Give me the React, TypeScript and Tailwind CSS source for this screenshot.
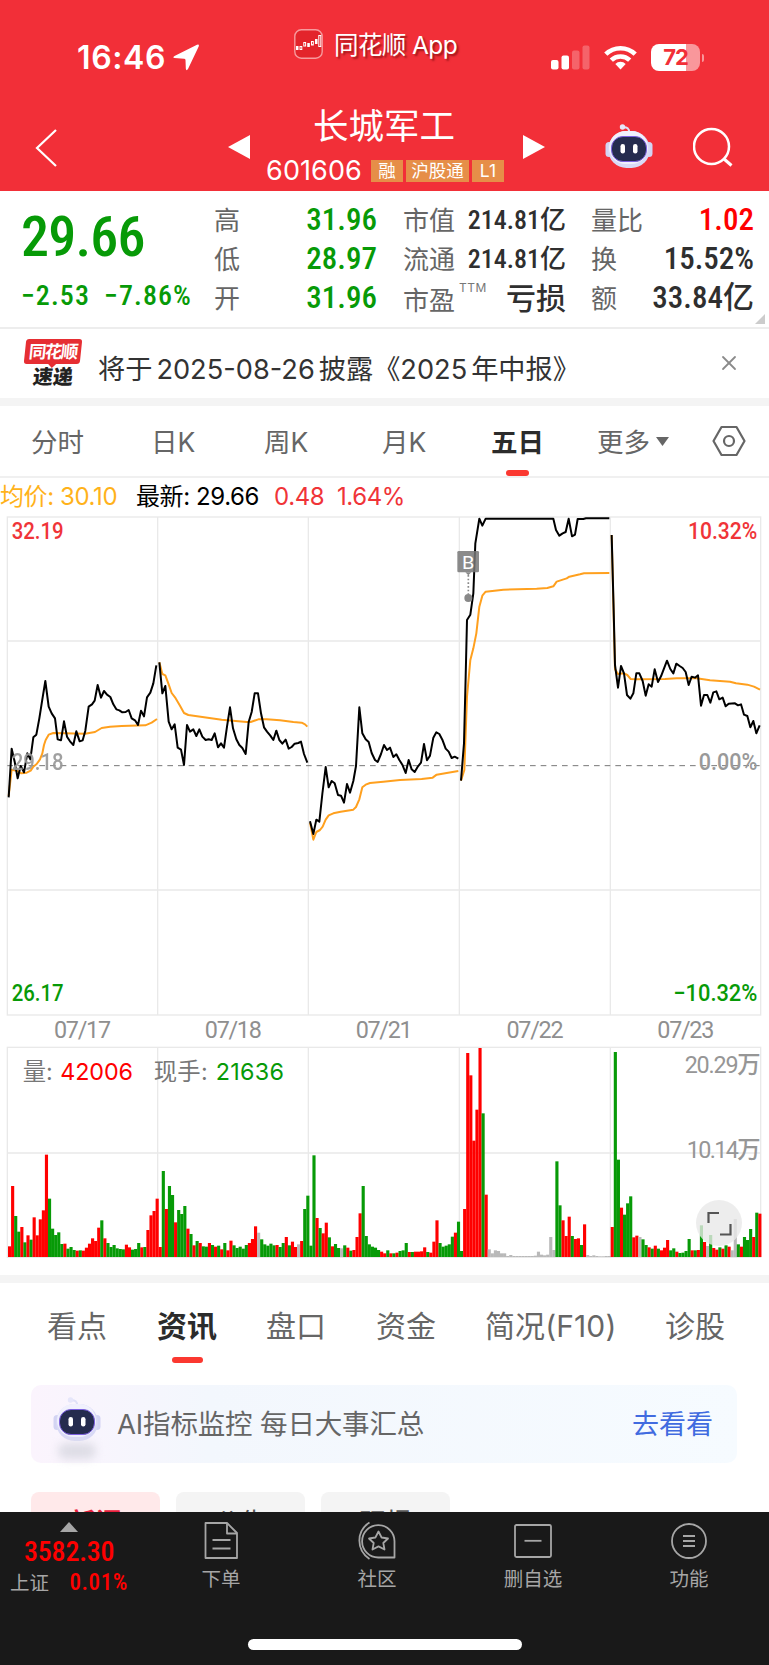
import React, { useState } from "react";
import { X } from "lucide-react";

const DAYS = ["07/17", "07/18", "07/21", "07/22", "07/23"];

// Chart space is 3 units per CSS pixel
const DAY_X = [22, 473, 925, 1378, 1831, 2282];

// [x offset, price points, average points]
const SERIES: [number, string, string][] = [
  [
    0,
    "26,862 35,716 44,755 53,805 62,768 72,787 82,730 91,748 100,682 109,674 118,625 127,568 136,513 146,590 155,610 165,625 173,688 183,691 192,634 201,680 210,694 220,705 229,664 239,694 248,691 256,662 266,590 276,583 284,572 293,525 303,563 312,543 321,554 331,561 340,583 349,598 358,601 367,607 377,606 386,600 395,625 405,631 414,645 423,602 432,619 441,562 451,548 460,520 469,466",
    "26,858 35,779 50,782 64,790 80,788 92,782 100,770 110,762 120,748 127,730 132,705 137,690 146,674 160,669 255,671 285,666 305,654 330,650 365,648 436,646 455,638 471,627",
  ],
  [
    0,
    "478,457 487,550 496,528 506,635 515,658 524,643 533,713 543,719 552,765 561,645 570,665 580,658 589,678 598,658 607,680 617,690 626,688 635,690 644,670 654,712 663,700 672,713 681,650 690,592 699,655 709,688 718,705 727,714 737,732 746,636 755,606 764,550 774,550 783,610 792,652 801,665 811,677 820,690 829,662 838,690 847,701 857,689 866,716 875,711 884,701 895,699 903,695 912,732 922,758",
    "478,457 487,492 496,496 506,523 515,549 525,562 540,587 552,609 565,615 665,629 740,636 752,636 775,628 800,628 840,631 880,636 905,638 915,643 922,650",
  ],
  [
    900,
    "30,934 40,972 49,929 58,935 67,852 77,771 86,832 95,813 104,820 114,855 123,857 132,878 141,822 150,848 160,813 168,768 178,592 187,670 197,688 206,696 215,729 225,750 233,756 243,732 252,705 261,720 270,713 280,741 289,733 298,750 307,764 317,789 326,750 335,778 344,786 354,769 363,758 372,702 381,751 390,737 400,683 409,667 418,672 427,689 437,716 446,725 455,744 464,740 475,746",
    "30,938 40,989 49,966 60,960 68,950 77,929 86,916 100,910 122,905 160,899 168,891 178,868 187,832 197,824 210,819 250,815 300,810 365,807 398,803 410,794 440,789 475,783",
  ],
  [
    900,
    "483,812 492,700 497,500 501,330 511,314 520,250 526,100 538,26 547,47 557,26 760,26 768,60 778,77 788,70 797,66 806,26 816,79 825,74 833,27 850,27 858,25 928,25",
    "483,812 493,780 501,560 511,450 520,415 529,370 538,290 547,257 557,245 610,239 710,236 742,234 760,229 770,215 800,205 808,200 840,193 852,190 928,189",
  ],
  [
    1680,
    "155,75 161,300 165,465 174,533 183,468 192,490 201,555 211,566 220,550 229,490 238,490 248,513 257,557 266,523 275,530 284,478 294,516 303,499 321,452 331,477 340,490 349,461 359,468 368,474 377,486 386,525 395,500 405,503 414,496 423,587 432,555 442,555 451,578 460,547 469,544 478,568 488,563 497,589 506,581 525,580 534,586 543,583 552,614 562,618 571,652 580,633 589,670 599,646",
    "155,75 165,478 174,492 192,490 202,495 212,507 230,508 315,507 350,505 410,505 450,511 510,515 528,520 562,524 582,530 600,539",
  ],
];

// r = up, g = down, x = flat; the number is the bar's top edge
const VOLUME = [
  "r799 r618 g708 g755 r741 g787 r766 g779 r712 r766 r718 r691 r524 g656 g746 g765 g757 g792 r791 g806 g801 g810 r812 g811 r812 r803 r791 r775 r783 r743 g721 r775 g789 g801 g795 g805 g807 g808 r794 r802 g809 g807 g789 r802 g801 r750 r706 r693 r656",
  "r801 g573 r687 g618 g645 r727 g690 g702 g678 r746 g762 r796 g783 r789 g799 g800 r789 g795 r800 g797 r808 g789 r811 r782 g796 g804 g800 g806 g795 r789 r777 r739 x758 g778 g793 g797 g791 g796 r795 g801 g789 r771 g796 r785 r801 x793 r783 g687 g647",
  "g797 g526 r714 g744 r760 r728 g772 r799 g792 g804 x805 g796 r803 g812 r810 r771 r700 g618 g768 g793 g800 g803 g810 r815 r820 g811 r820 g820 r818 g813 g811 g789 r816 g816 r815 r815 r814 r802 g816 r818 r785 r721 g789 g800 g797 g793 g770 r758 g725",
  "g813 r687 r219 r286 r482 r389 r204 g400 r644 x808 x820 x811 x813 x820 x820 x828 x825 x828 x828 x828 x828 x828 x828 x828 x827 x815 x824 x826 x824 x771 x810 g544 g676 r721 r768 r710 g768 r777 r775 g795 r733 x825 x828 x826 x828 x829 x829 x828 x828",
  "r741 g216 g539 r683 g704 g670 g649 r772 r767 x771 g778 g795 r802 g806 r797 g806 r811 r803 r780 g811 g805 r815 g819 g818 g813 g777 r811 g811 r810 g736 r786 x798 g765 r804 r809 g802 r806 g796 r800 x811 x717 g793 r800 g771 g780 g747 r771 g698 r701",
];

const BAR_FILL: Record<string, string> = { r: "#ff0000", g: "#079a07", x: "#b9b9b9" };

const NUM = "font-['Roboto','Noto_Sans_CJK_SC',sans-serif] font-medium";

const Robot = ({ className = "" }: { className?: string }) => (
  <svg viewBox="0 0 48 44" className={className} fill="none">
    <path d="M24 9C24.500 4 22 3.500 18 3" stroke="#dfe0f8" strokeWidth="2" />
    <circle cx="17.500" cy="3" r="2.700" fill="#e6e6fa" />
    <rect x="0.500" y="18" width="7" height="15" rx="3.500" fill="#d3d4f3" />
    <rect x="40.500" y="18" width="7" height="15" rx="3.500" fill="#d3d4f3" />
    <rect x="3" y="7" width="42" height="37" rx="18.500" fill="#d9daf6" />
    <rect x="4" y="7" width="39" height="33" rx="16.500" fill="#f0f0fd" />
    <rect x="6.500" y="12.500" width="35" height="25" rx="11.500" fill="#252c4e" stroke="#7b5fe0" strokeWidth="1" />
    <rect x="15.500" y="20" width="4.500" height="9.500" rx="2.200" fill="#fff" />
    <rect x="28" y="20" width="4.500" height="9.500" rx="2.200" fill="#fff" />
  </svg>
);

const StatusBar = () => (
  <div className="flex h-[92px] items-start pl-[77px] text-white">
    <span className="mt-[38px] w-[96px] font-['Inter',sans-serif] text-[32px] leading-[40px] font-semibold tracking-[.6px]">16:46</span>
    <svg className="mt-[44px] h-[27px] w-[27px]" viewBox="0 0 27 27">
      <path d="M24 .8Q26.500 -.2 25.700 2.500L15 25Q13.300 27.500 12.800 24.500L12.500 16Q12.400 14.800 11 14.700L1.500 14Q-.8 13.500 1.500 12Z" fill="#fff" />
    </svg>
    <svg className="mt-[29px] ml-[94px] h-[30px] w-[29px]" viewBox="0 0 29 30">
      <rect x=".8" y=".8" width="27.400" height="28.400" rx="6.500" fill="#e3242b" stroke="#f79a9d" strokeWidth="1.400" />
      <g stroke="#fff" strokeWidth="1">
        <rect x="2.500" y="17.500" width="1.500" height="3" fill="#fff" />
        <rect x="6" y="17.500" width="1.800" height="3" fill="none" />
        <rect x="9.800" y="13.500" width="1.800" height="3.500" fill="none" />
        <rect x="13.800" y="14.500" width="1.500" height="3" fill="#fff" />
        <rect x="17.500" y="12.500" width="1.800" height="3.500" fill="none" />
        <rect x="21.500" y="10.500" width="1.500" height="4" fill="#fff" />
        <rect x="24.800" y="6.500" width="2" height="11" fill="none" />
      </g>
    </svg>
    <span className="mt-[27px] ml-[11px] w-[217px] text-[24.500px] leading-[36px] tracking-[-.6px] [text-shadow:2px_2px_2px_rgba(90,0,0,.55)]">同花顺 App</span>
    <svg className="mt-[45px] h-[25px] w-[39px]" viewBox="0 0 39 25" fill="#fff">
      <rect y="15" width="7.500" height="9.500" rx="2" />
      <rect x="10.500" y="10.500" width="7.500" height="14" rx="2" />
      <rect x="21" y="5.500" width="7.500" height="19" rx="2" opacity=".25" />
      <rect x="31.500" y="0.500" width="7" height="24" rx="2" opacity=".25" />
    </svg>
    <svg className="mt-[45px] ml-[14px] h-[25px] w-[33px]" viewBox="0 0 33 25" fill="none" stroke="#fff" strokeWidth="4.600">
      <path d="M1.800 9.200a21 21 0 0 1 29.400 0" />
      <path d="M7.300 15.200a13.200 13.200 0 0 1 18.400 0" />
      <path d="M16.500 24.500l-5.200-5.600a7.600 7.600 0 0 1 10.400 0z" fill="#fff" stroke="none" />
    </svg>
    <div className="mt-[44px] ml-[14px] flex h-[27px] w-[49px] items-center justify-center rounded-[8px] bg-linear-to-r from-white from-72% to-[#f9979b] to-72% font-['Inter',sans-serif] text-[22px] font-bold tracking-[-1px] text-[#f22f38]">72</div>
    <span className="mt-[54px] ml-[1.500px] h-[8px] w-[2.500px] rounded-r-full bg-[#f9979b]" />
  </div>
);

const TitleBar = () => (
  <div className="flex h-[99px] text-white">
    <svg className="mt-[37px] ml-[34px] h-[38px] w-[24px]" viewBox="0 0 24 38" fill="none" stroke="#fff" strokeWidth="2.200">
      <path d="M22 1L3 19L22 37" />
    </svg>
    <svg className="mt-[42px] ml-[169px] h-[26px] w-[24px]" viewBox="0 0 24 26" fill="#fff">
      <path d="M1 13L23 1V25Z" />
    </svg>
    <div className="ml-[15px] flex w-[256px] flex-col items-center pr-[20px]">
      <div className="mt-[10px] text-[35.500px] leading-[50px]">长城军工</div>
      <div className="mt-[8px] flex items-center gap-[3px] pl-[2px] text-[17.500px] leading-[22px] [&>i]:h-[22px] [&>i]:bg-[#e68e48] [&>i]:text-center [&>i]:not-italic">
        <span className="mr-[6px] text-[27px] tracking-[.1px]">601606</span>
        <i className="w-[32px]">融</i>
        <i className="w-[63px]">沪股通</i>
        <i className="w-[32px]">L1</i>
      </div>
    </div>
    <svg className="mt-[42px] h-[26px] w-[24px]" viewBox="0 0 24 26" fill="#fff">
      <path d="M23 13L1 1V25Z" />
    </svg>
    <Robot className="mt-[32px] ml-[59px] h-[44px] w-[48px]" />
    <svg className="mt-[35px] ml-[40px] h-[40px] w-[40px]" viewBox="0 0 40 40" fill="none" stroke="#fff" strokeWidth="2.500">
      <circle cx="18.500" cy="19.500" r="17.500" />
      <path d="M30.500 31.500L38.500 38.500" strokeWidth="3" />
    </svg>
  </div>
);

const Quote = () => (
  <section className="relative flex h-[138px] shrink-0 border-b-2 border-[#ededed] pl-[21px]">
    <div className={`${NUM} w-[193px] text-[#079a07]`}>
      <div className="mt-[13px] text-[56px] leading-[66px] tracking-[-.8px] [font-stretch:85%]">29.66</div>
      <div className="mt-[9px] flex gap-[14px] text-[28px] leading-[34px] tracking-[1.100px] [font-stretch:85%]">
        <span>−2.53</span>
        <span>−7.86%</span>
      </div>
    </div>
    <div className="grid w-[163px] grid-rows-3 pt-[10px] pb-[9px] text-[#079a07]">
      {[["高", "31.96"], ["低", "28.97"], ["开", "31.96"]].map(([k, v]) => (
        <div key={k} className="flex items-center justify-between">
          <span className="text-[26px] text-[#666]">{k}</span>
          <span className={`${NUM} text-[31px] [font-stretch:85%]`}>{v}</span>
        </div>
      ))}
    </div>
    <div className="ml-[26px] grid w-[163px] grid-rows-3 pt-[10px] pb-[9px]">
      {[["市值", "214.81亿"], ["流通", "214.81亿"]].map(([k, v]) => (
        <div key={k} className="flex items-center justify-between">
          <span className="text-[26px] text-[#666]">{k}</span>
          <span className={`${NUM} text-[26px] text-[#2f2f2f] [font-stretch:85%]`}>{v}</span>
        </div>
      ))}
      <div className="flex items-center">
        <span className="pt-[4px] text-[26px] text-[#666]">市盈</span>
        <span className="mb-[22px] ml-[4px] text-[12px] tracking-[.5px] text-[#777]">TTM</span>
        <span className="ml-auto text-[30px] font-medium text-[#2f2f2f]">亏损</span>
      </div>
    </div>
    <div className="ml-[25px] grid w-[163px] grid-rows-3 pt-[10px] pb-[9px]">
      {[["量比", "1.02"], ["换", "15.52%"], ["额", "33.84亿"]].map(([k, v], i) => (
        <div key={k} className="flex items-center justify-between">
          <span className="text-[26px] text-[#666]">{k}</span>
          <span className={`${NUM} text-[31px] [font-stretch:85%] ${i ? "text-[#2f2f2f]" : "text-[#ff0000]"}`}>{v}</span>
        </div>
      ))}
    </div>
    <svg className="absolute right-[4px] bottom-[3px] size-[10px]" viewBox="0 0 10 10">
      <path d="M10 0V10H0Z" fill="#ccc" />
    </svg>
  </section>
);

const News = ({ onClose }: { onClose: () => void }) => (
  <section className="flex h-[69px] shrink-0 items-start">
    <div className="mt-[10px] ml-[25px] w-[56px] text-center">
      <div className="relative h-[25px] -skew-x-6 rounded-[3px] bg-[#e62e33] text-[17.500px] leading-[26px] font-bold tracking-[-1.500px] text-white">
        同花顺
        <svg className="absolute top-[24px] left-[23px] h-[5px] w-[11px]" viewBox="0 0 12 6">
          <path d="M0 0H12L6 6Z" fill="#e62e33" />
        </svg>
      </div>
      <div className="mt-[3px] -skew-x-6 text-[20px] leading-[20px] font-black text-[#222]">速递</div>
    </div>
    <span className="mt-[21px] ml-[17px] text-[27.200px] leading-[40px] whitespace-nowrap text-[#333]">
      将于<span className="mx-[4px]">2025-08-26</span>披露《2025<span className="ml-[4px]">年中报》</span>
    </span>
    <button type="button" onClick={onClose} className="mt-[22px] mr-[28px] ml-auto">
      <X size={24} strokeWidth={1.8} color="#8a8a8a" />
    </button>
  </section>
);

const PeriodTabs = () => {
  const [active, setActive] = useState("五日");
  return (
    <nav className="flex h-[72px] shrink-0 items-center border-b-2 border-[#f0f0f0] pl-[31px] text-[26.500px] text-[#666]">
      {["分时", "日K", "周K", "月K", "五日"].map((t) => (
        <button
          key={t}
          type="button"
          onClick={() => setActive(t)}
          className={`relative h-full pt-[3px] text-left ${t === active ? "ml-px w-[106px] font-bold text-[#2b2b2b]" : t === "分时" ? "w-[120px]" : t === "日K" ? "w-[113px]" : t === "周K" ? "w-[118px]" : "w-[108px]"}`}
        >
          {t}
          {t === active && <span className="absolute bottom-0 left-[15px] h-[6px] w-[23px] rounded-[3px] bg-[#fb3830]" />}
        </button>
      ))}
      <button type="button" className="flex items-center gap-[6px] pt-[3px]">
        更多
        <svg className="mb-[2px] h-[9px] w-[13px]" viewBox="0 0 13 9">
          <path d="M0 0H13L6.500 9Z" fill="#666" />
        </svg>
      </button>
      <svg className="mr-[23px] ml-auto h-[32px] w-[34px]" viewBox="0 0 34 32" fill="none" stroke="#666" strokeWidth="2.200">
        <path d="M9.500 2H24.500L32.500 16L24.500 30H9.500L1.500 16Z" strokeLinejoin="round" />
        <circle cx="17" cy="16" r="5" />
      </svg>
    </nav>
  );
};

const Charts = () => (
  <div className="relative h-[757px]">
    <svg viewBox="0 0 2307 2271" className="block h-[757px] w-[769px] font-['Roboto','Noto_Sans_CJK_SC',sans-serif] [font-stretch:90%]" fontWeight="500" fontSize="70">
      <g fill="none" stroke="#e9e9e9" strokeWidth="4">
        <rect x="22" y="21" width="2260" height="1494" />
        <rect x="22" y="1612" width="2260" height="630" />
        {DAY_X.slice(1, 5).map((x) => (
          <path key={x} d={`M${x} 21V1515M${x} 1612V2242`} />
        ))}
        <path d="M22 393H2282M22 1140H2282M22 1929H2282" />
      </g>
      <path d="M22 767H2282" stroke="#777" strokeWidth="3" strokeDasharray="17 15" />

      {SERIES.map(([dx, price, avg], i) => (
        <g key={i} transform={`translate(${dx} 0)`} fill="none" strokeWidth="6" strokeLinejoin="round">
          <polyline points={avg} stroke="#ffa01e" />
          <polyline points={price} stroke="#000" />
        </g>
      ))}

      <g transform="translate(1372 123)">
        <rect width="65" height="64" rx="4" fill="#777" opacity=".85" />
        <path d="M24 64H42L33 73Z" fill="#888" />
        <path d="M33 72V130" stroke="#888" strokeWidth="5" strokeDasharray="5 6" />
        <circle cx="33" cy="141" r="12" fill="#888" />
        <text x="14" y="53" fontSize="56" fontWeight="400" textLength="37" lengthAdjust="spacingAndGlyphs" fill="#fff">B</text>
      </g>

      <text x="35" y="88" textLength="156" lengthAdjust="spacingAndGlyphs" fill="#f03438">32.19</text>
      <text x="2064" y="88" textLength="208" lengthAdjust="spacingAndGlyphs" fill="#f03438">10.32%</text>
      <text x="35" y="780" textLength="156" lengthAdjust="spacingAndGlyphs" fill="#999" opacity=".92">29.18</text>
      <text x="2096" y="780" textLength="176" lengthAdjust="spacingAndGlyphs" fill="#999">0.00%</text>
      <text x="35" y="1474" textLength="156" lengthAdjust="spacingAndGlyphs" fill="#079a07">26.17</text>
      <text x="2020" y="1474" textLength="252" lengthAdjust="spacingAndGlyphs" fill="#079a07">−10.32%</text>
      {DAYS.map((d, i) => (
        <text key={d} x={162 + i * 452.5} y="1585" textLength="171" fontWeight="450" fill="#8f8f8f">{d}</text>
      ))}

      {VOLUME.map((day, i) =>
        day.split(" ").map((bar, j) => {
          const top = Number(bar.slice(1)) + 1410;
          return <rect key={`${i}-${j}`} x={24 + (i * 49 + j) * 9.225} y={top} width="9.4" height={2241 - top} fill={BAR_FILL[bar[0]]} />;
        })
      )}
      <text x="2054" y="1689" textLength="228" fontWeight="450" fill="#969696">20.29万</text>
      <text x="2060" y="1943" textLength="222" fontWeight="450" fill="#969696">10.14万</text>
      <g className="font-['Inter','Noto_Sans_CJK_SC',sans-serif] [font-stretch:100%]" fontWeight="400">
        <text x="68" y="1710" textLength="90" fill="#777">量:</text>
        <text x="181" y="1710" textLength="218" fill="#ff0000">42006</text>
        <text x="461" y="1710" textLength="162" fill="#777">现手:</text>
        <text x="647" y="1710" textLength="205" fill="#079a07">21636</text>
      </g>
    </svg>
    <button type="button" className="absolute right-[27px] bottom-[21px] flex size-[46px] items-center justify-center rounded-full bg-[#e8e8e8]/80">
      <svg className="size-[25px]" viewBox="0 0 25 25" fill="none" stroke="#555" strokeWidth="2.200">
        <path d="M1.500 12V2H12M23.500 13V23.500H13" />
      </svg>
    </button>
  </div>
);

const InfoTabs = () => (
  <nav className="flex h-[102px] shrink-0 items-start pt-[21px] pl-[47px] text-[30px] leading-[44px] text-[#666]">
    <span className="w-[110px]">看点</span>
    <span className="relative w-[109px] font-bold text-[#2b2b2b]">
      资讯
      <span className="absolute top-[53px] left-[15px] h-[6px] w-[31px] rounded-[3px] bg-[#fb3830]" />
    </span>
    <span className="w-[110px]">盘口</span>
    <span className="w-[109px]">资金</span>
    <span className="w-[180px] tracking-[.1px] whitespace-nowrap">简况(F10)</span>
    <span>诊股</span>
  </nav>
);

const AiBanner = () => (
  <div className="mr-[32px] ml-[31px] flex h-[78px] shrink-0 items-center rounded-[10px] bg-linear-to-r from-[#fbf4fd] via-[#f3f7fd] via-25% to-[#f6fbff] pr-[24px] pl-[21px] text-[27.500px]">
    <div className="flex w-[50px] flex-col items-center pt-[6px]">
      <Robot className="h-[46px] w-[48px]" />
      <span className="mt-[1px] h-[16px] w-[38px] rounded-full bg-[#dedde6] blur-[4px]" />
    </div>
    <span className="ml-[15px] pt-[2px] tracking-[-.15px] text-[#666]">AI指标监控 每日大事汇总</span>
    <span className="ml-auto pt-[2px] text-[27px] text-[#416be0]">去看看</span>
  </div>
);

const ICONS: Record<string, React.ReactNode> = {
  下单: (
    <>
      <path d="M4.500 3H26L36 13V38H4.500Z" />
      <path d="M26 3V13.500H36M11.500 20H29.500M11.500 28.500H29.500" />
    </>
  ),
  社区: (
    <>
      <path d="M37.500 37.500H21.500A16.200 16.200 0 1 1 37.500 21.300Z" />
      <path d="M12.500 2.500C-1 11-1 30 12.500 39" />
      <path d="M21.500 11.500L24.600 17.500L31 18.500L26.300 23L27.500 29.500L21.500 26.400L15.500 29.500L16.700 23L12 18.500L18.400 17.500Z" />
    </>
  ),
  删自选: (
    <>
      <rect x="2" y="5" width="36" height="32" rx="1.500" />
      <path d="M11.500 20.800H28.500" />
    </>
  ),
  功能: (
    <>
      <circle cx="20" cy="21" r="17" />
      <path d="M14 16H26M14 21H26M14 26H26" />
    </>
  ),
};

const BottomBar = () => (
  <footer className="flex h-[153px] shrink-0 flex-col bg-[#191919] text-[#a6a6a6]">
    <div className="flex">
      <div className="w-[140px]">
        <svg className="mt-[10px] ml-[60px] h-[10px] w-[18px]" viewBox="0 0 18 10">
          <path d="M9 0L18 10H0Z" fill="#a6a6a6" />
        </svg>
        <div className={`${NUM} mt-[4px] ml-[24px] text-[28px] leading-[32px] tracking-[-.2px] text-[#ff0000] [font-stretch:85%]`}>3582.30</div>
        <div className="flex items-center justify-between pr-[12px] pl-[10px] text-[19.500px] leading-[30px]">
          上证
          <span className={`${NUM} text-[23px] tracking-[.6px] text-[#ff0000] [font-stretch:85%]`}>0.01%</span>
        </div>
      </div>
      {Object.entries(ICONS).map(([name, icon], i) => (
        <button key={name} type="button" className={`flex w-[156px] flex-col items-center pt-[8px] ${i === 0 ? "ml-[3px]" : ""}`}>
          <svg className="h-[41px] w-[40px]" viewBox="0 0 40 41" fill="none" stroke="#a6a6a6" strokeWidth="1.800" strokeLinejoin="round">
            {icon}
          </svg>
          <span className="mt-[4px] text-[19.500px] leading-[28px]">{name}</span>
        </button>
      ))}
    </div>
    <span className="mx-auto mt-auto mb-[15px] h-[11px] w-[274px] rounded-full bg-white" />
  </footer>
);

export default function App() {
  const [showNews, setShowNews] = useState(true);
  return (
    <div className="flex h-[1665px] w-[769px] flex-col overflow-hidden bg-white font-['Inter','Noto_Sans_CJK_SC',sans-serif]">
      <header className="h-[191px] shrink-0 bg-[#f22f38]">
        <StatusBar />
        <TitleBar />
      </header>
      <Quote />
      {showNews && <News onClose={() => setShowNews(false)} />}
      <div className="h-[8px] shrink-0 bg-[#f4f4f4]" />
      <PeriodTabs />
      <div className="flex h-[32px] shrink-0 items-center pt-[5px] text-[24px] leading-[32px] tracking-[-.4px] whitespace-pre text-black">
        <span className="w-[136px] text-[#ffb21a]">均价: 30.10</span>
        <span className="w-[138px]">最新: 29.66</span>
        <span className="w-[63px] text-[#f03438]">0.48</span>
        <span className="text-[#f03438]">1.64%</span>
      </div>
      <div className="h-[765px] shrink-0">
        <Charts />
      </div>
      <div className="h-[8px] shrink-0 bg-[#f4f4f4]" />
      <InfoTabs />
      <AiBanner />
      <div className="flex h-[49px] shrink-0 gap-[16px] overflow-hidden pt-[29px] pl-[31px] text-[26px] leading-[30px] [&>span]:h-[58px] [&>span]:w-[129px] [&>span]:rounded-[8px] [&>span]:bg-[#f4f4f4] [&>span]:pt-[16px] [&>span]:text-center [&>span]:text-[#555]">
        <span className="bg-[#ffe9ea]! font-bold text-[#e8203c]!">新闻</span>
        <span>公告</span>
        <span>研报</span>
      </div>
      <BottomBar />
    </div>
  );
}
